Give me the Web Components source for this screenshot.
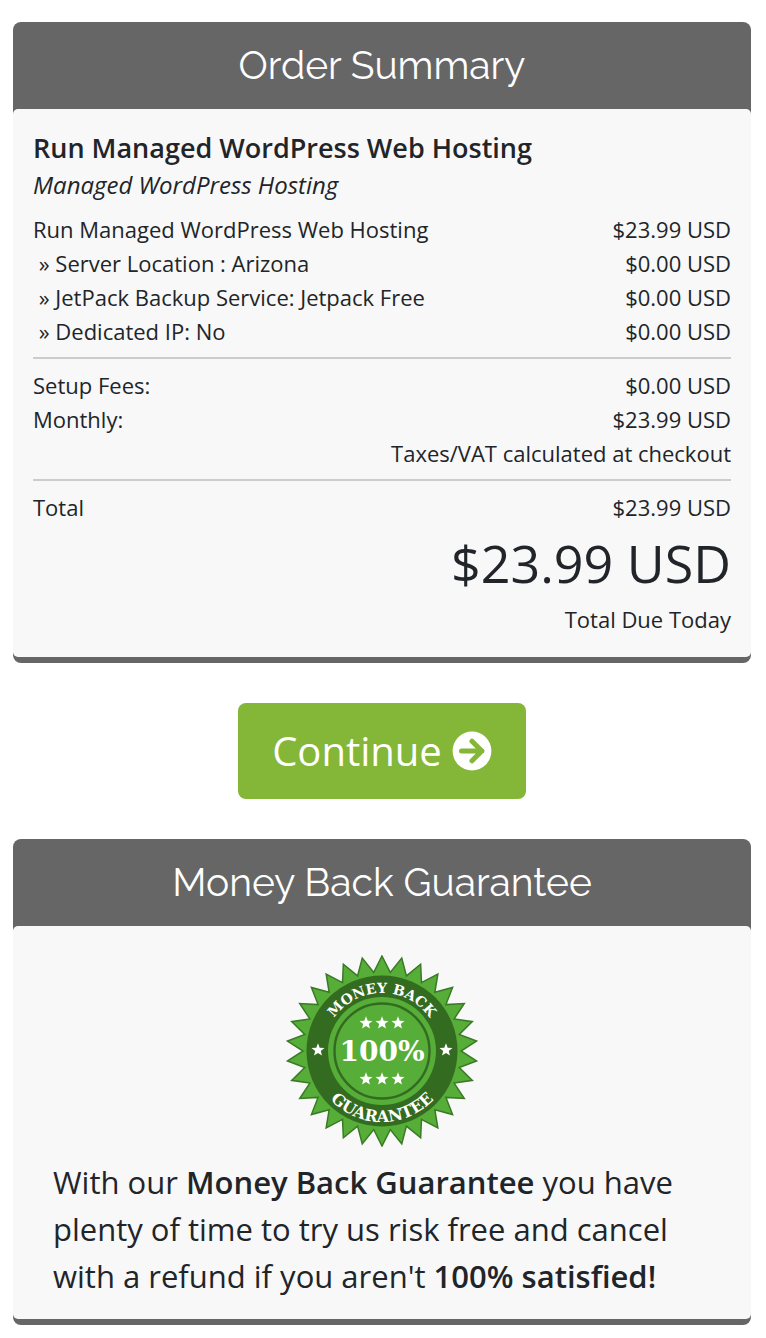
<!DOCTYPE html>
<html lang="en">
<head>
<meta charset="utf-8">
<meta name="viewport" content="width=device-width, initial-scale=1">
<title>Order Summary</title>
<style>
  body {
    margin: 0;
    padding: 22px 15px 14px 13px;
    background: #fff;
    color: #212529;
    font: 22px/34px "Open Sans", "Noto Sans", sans-serif;
  }

  main {
    display: flex;
    flex-direction: column;
    gap: 40px;
  }
</style>
</head>
<body>
<main>
  <su-panel heading="Order Summary">
    <order-product name="Run Managed WordPress Web Hosting" group="Managed WordPress Hosting"></order-product>
    <order-group>
      <order-line label="Run Managed WordPress Web Hosting" price="$23.99 USD"></order-line>
      <order-line label="&nbsp;» Server Location : Arizona" price="$0.00 USD"></order-line>
      <order-line label="&nbsp;» JetPack Backup Service: Jetpack Free" price="$0.00 USD"></order-line>
      <order-line label="&nbsp;» Dedicated IP: No" price="$0.00 USD"></order-line>
    </order-group>
    <order-group divided>
      <order-line label="Setup Fees:" price="$0.00 USD"></order-line>
      <order-line label="Monthly:" price="$23.99 USD"></order-line>
      <order-line price="Taxes/VAT calculated at checkout"></order-line>
    </order-group>
    <order-group divided>
      <order-line label="Total" price="$23.99 USD"></order-line>
    </order-group>
    <order-due amount="$23.99 USD">Total Due Today</order-due>
  </su-panel>

  <continue-button>Continue</continue-button>

  <su-panel heading="Money Back Guarantee">
    <money-back>
      With our <b>Money Back Guarantee</b> you have plenty of time to try us
      risk free and cancel with a refund if you aren't <b>100% satisfied!</b>
    </money-back>
  </su-panel>
</main>

<script>
class Panel extends HTMLElement {
  constructor() {
    super();
    this.attachShadow({ mode: "open" });
    this.shadowRoot.innerHTML = `
      <style>
      :host {
        display: block;
        background: #666;
        border-radius: 8px;
        padding-bottom: 6px;
      }

      h2 {
        margin: 0;
        padding: 20px;
        color: #fff;
        font: 400 39px/47px Raleway, Lato, sans-serif;
        text-align: center;
      }

      .body {
        padding: 19px 20px;
        background: #f8f8f8;
        border-radius: 5px;
      }
      </style>
      <section>
        <h2>${this.getAttribute("heading")}</h2>
        <div class="body"><slot></slot></div>
      </section>
    `;
  }
}

class OrderProduct extends HTMLElement {
  constructor() {
    super();
    this.attachShadow({ mode: "open" });
    this.shadowRoot.innerHTML = `
      <style>
      :host {
        display: block;
        margin-bottom: 10px;
      }

      h3 {
        margin: 0;
        font-size: 27px;
        font-weight: 600;
        line-height: 40px;
      }

      em {
        display: block;
        font-size: 24px;
      }
      </style>
      <h3>${this.getAttribute("name")}</h3>
      <em>${this.getAttribute("group")}</em>
    `;
  }
}

class OrderGroup extends HTMLElement {
  constructor() {
    super();
    this.attachShadow({ mode: "open" });
    this.shadowRoot.innerHTML = `
      <style>
      :host {
        display: block;
      }

      :host([divided]) {
        margin-top: 9px;
        padding-top: 9px;
        border-top: 2px solid #ccc;
      }
      </style>
      <slot></slot>
    `;
  }
}

class OrderLine extends HTMLElement {
  constructor() {
    super();
    this.attachShadow({ mode: "open" });
    this.shadowRoot.innerHTML = `
      <style>
      :host {
        display: flex;
        justify-content: space-between;
      }

      .price {
        margin-left: auto;
        text-align: right;
      }
      </style>
      ${this.hasAttribute("label") ? `<span>${this.getAttribute("label")}</span>` : ""}
      <span class="price">${this.getAttribute("price")}</span>
    `;
  }
}

class OrderDue extends HTMLElement {
  constructor() {
    super();
    this.attachShadow({ mode: "open" });
    this.shadowRoot.innerHTML = `
      <style>
      :host {
        display: block;
        padding-bottom: 2px;
        text-align: right;
      }

      .amount {
        font-size: 52px;
        line-height: 78px;
      }
      </style>
      <div class="amount">${this.getAttribute("amount")}</div>
      <slot></slot>
    `;
  }
}

class ContinueButton extends HTMLElement {
  constructor() {
    super();
    this.attachShadow({ mode: "open" });
    this.shadowRoot.innerHTML = `
      <style>
      :host {
        display: flex;
        justify-content: center;
      }

      button {
        display: flex;
        align-items: center;
        gap: 10px;
        padding: 18px 34px;
        border: 0;
        border-radius: 8px;
        background: #84b637;
        color: #fff;
        font: 400 40px/60px "Open Sans", "Noto Sans", sans-serif;
        cursor: pointer;
      }

      svg {
        width: 40px;
        height: 40px;
      }
      </style>
      <button type="button">
        <slot></slot>
        <svg viewBox="0 0 40 40" aria-hidden="true">
          <circle cx="20" cy="20" r="19.4" fill="#fff"/>
          <path d="M9.5 20H30M20 10.2 29.8 20 20 29.8" fill="none" stroke="#84b637"
            stroke-width="5" stroke-linecap="round" stroke-linejoin="round"/>
        </svg>
      </button>
    `;
  }
}

// Points of a star or a toothed disc, first tip straight up
function starPoints(cx, cy, tips, outer, inner) {
  const points = [];
  for (let i = 0; i < tips * 2; i++) {
    const r = i % 2 ? inner : outer;
    const a = (Math.PI * i) / tips - Math.PI / 2;
    points.push(`${(cx + r * Math.cos(a)).toFixed(2)},${(cy + r * Math.sin(a)).toFixed(2)}`);
  }
  return points.join(" ");
}

class GuaranteeSeal extends HTMLElement {
  constructor() {
    super();
    this.attachShadow({ mode: "open" });

    const stars = [
      [-16, -28], [0, -28], [16, -28],
      [-16, 28], [0, 28], [16, 28],
      [-64, -1], [64, -1],
    ]
      .map(([x, y]) => `<polygon points="${starPoints(x, y, 5, 6.8, 2.9)}"/>`)
      .join("");

    this.shadowRoot.innerHTML = `
      <style>
      :host {
        display: block;
      }

      svg {
        display: block;
        width: 192px;
        height: 192px;
        margin: 0 auto;
      }

      text {
        font-family: "DejaVu Serif", serif;
        font-weight: 700;
        text-anchor: middle;
      }
      </style>
      <svg viewBox="-96 -96 192 192" role="img" aria-label="100% money back guarantee">
        <defs>
          <path id="top" d="M-58 0A58 58 0 0 1 58 0"/>
          <path id="bottom" d="M-71 0A71 71 0 0 0 71 0"/>
        </defs>
        <polygon points="${starPoints(0, 0, 30, 95, 79)}" fill="#56ad37" stroke="#3a7a26" stroke-width="1.5"/>
        <circle r="75.5" fill="#336b20"/>
        <circle r="54" fill="#56ad37"/>
        <circle r="47.5" fill="none" stroke="#336b20" stroke-width="2.4"/>
        <g fill="#fff">
          ${stars}
          <text y="10" font-size="28">100%</text>
          <text font-size="14"><textPath href="#top" startOffset="50%">MONEY BACK</textPath></text>
          <text font-size="16"><textPath href="#bottom" startOffset="50%">GUARANTEE</textPath></text>
        </g>
      </svg>
    `;
  }
}

class MoneyBack extends HTMLElement {
  constructor() {
    super();
    this.attachShadow({ mode: "open" });
    this.shadowRoot.innerHTML = `
      <style>
      :host {
        display: block;
        padding: 10px 20px 0;
      }

      p {
        margin: 12px 0 0;
        font-size: 31px;
        line-height: 47px;
      }

      ::slotted(b) {
        font-weight: 600;
      }
      </style>
      <guarantee-seal></guarantee-seal>
      <p><slot></slot></p>
    `;
  }
}

customElements.define("su-panel", Panel);
customElements.define("order-product", OrderProduct);
customElements.define("order-group", OrderGroup);
customElements.define("order-line", OrderLine);
customElements.define("order-due", OrderDue);
customElements.define("continue-button", ContinueButton);
customElements.define("guarantee-seal", GuaranteeSeal);
customElements.define("money-back", MoneyBack);
</script>
</body>
</html>
